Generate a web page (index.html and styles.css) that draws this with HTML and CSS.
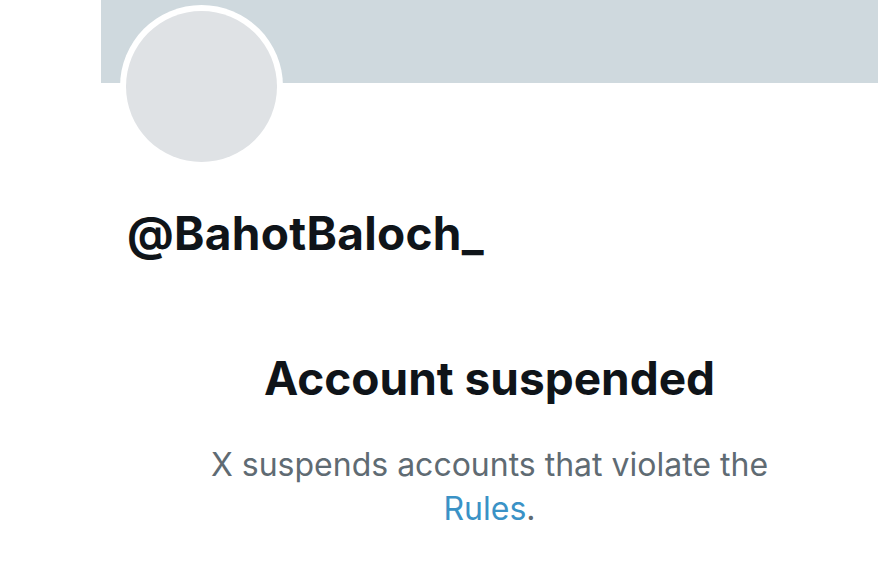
FILE: index.html
```html
<!DOCTYPE html>
<html lang="en">
<head>
<meta charset="utf-8">
<title>Account suspended</title>
<link rel="stylesheet" href="styles.css">
</head>
<body>
<main class="profile">
  <div class="banner"></div>
  <div class="avatar"><div class="avatar-inner"></div></div>
  <h1 class="handle">@BahotBaloch_</h1>
  <section class="notice">
    <h2 class="notice-title">Account suspended</h2>
    <p class="notice-text">X suspends accounts that violate the <a class="rules" href="#">Rules</a>.</p>
  </section>
</main>
</body>
</html>
```
FILE: styles.css
```css
html, body {
  margin: 0;
  padding: 0;
  background: #ffffff;
}
body {
  font-family: "Inter", "Roboto", "Liberation Sans", sans-serif;
  color: #0f1419;
}
.profile {
  margin-left: 101px;
  width: 777px;
}
.banner {
  height: 83px;
  background: #cfd9de;
}
.avatar {
  width: 163px;
  height: 163px;
  margin-top: -78px;
  margin-left: 19px;
  border-radius: 50%;
  background: #ffffff;
  padding: 6px;
  box-sizing: border-box;
}
.avatar-inner {
  width: 100%;
  height: 100%;
  border-radius: 50%;
  background: #dfe2e5;
}
.handle {
  margin: 39px 0 0 26px;
  font-size: 46px;
  font-weight: 700;
  line-height: 52px;
  letter-spacing: 0.3px;
}
.notice {
  text-align: center;
  margin-top: 93px;
}
.notice-title {
  margin: 0;
  font-size: 46px;
  font-weight: 700;
  line-height: 52px;
}
.notice-text {
  margin: 39px auto 0;
  width: 620px;
  font-size: 32px;
  font-weight: 400;
  line-height: 44px;
  color: #5f6b73;
}
.rules {
  color: #3a92c6;
  text-decoration: none;
}
```
